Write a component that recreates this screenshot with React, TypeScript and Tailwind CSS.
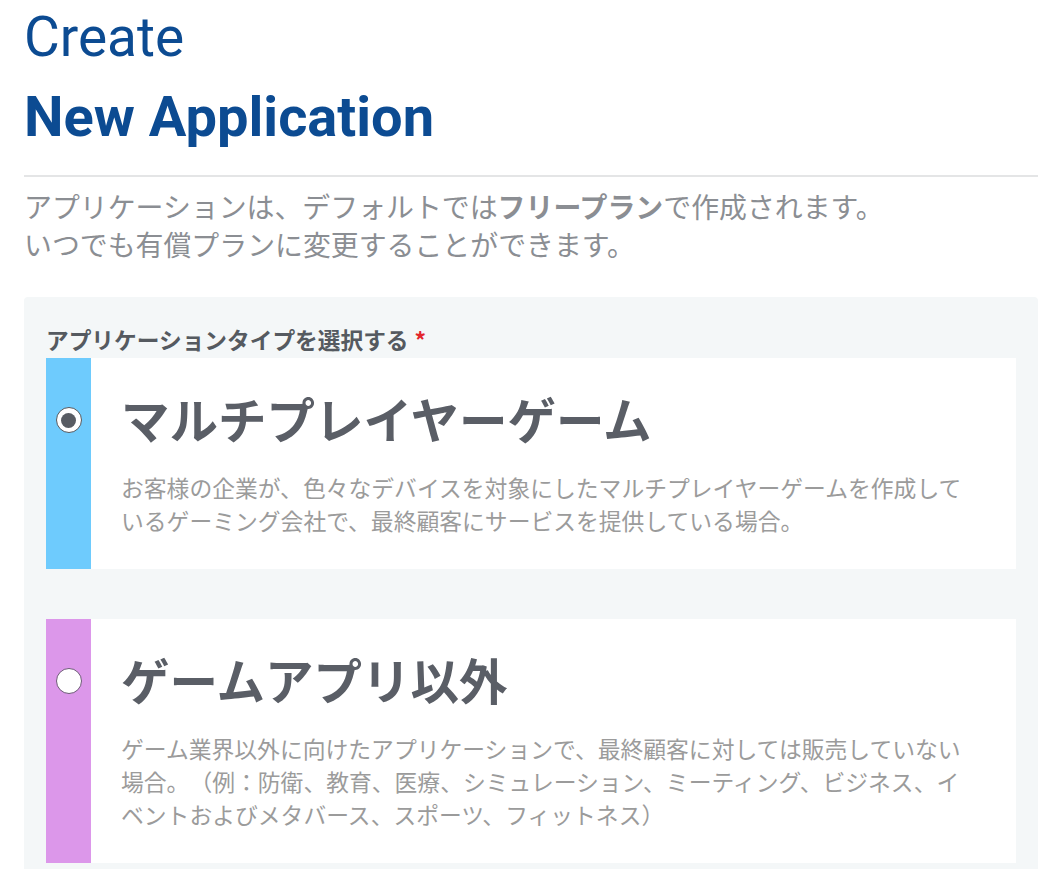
const jp = "font-['Noto_Sans_CJK_JP',sans-serif] [text-spacing-trim:space-all]";

const types = [
  {
    id: "game",
    title: "マルチプレイヤーゲーム",
    desc: "お客様の企業が、色々なデバイスを対象にしたマルチプレイヤーゲームを作成しているゲーミング会社で、最終顧客にサービスを提供している場合。",
    bar: "bg-[#6ecbfd]",
    ring: "border-[#55585e]",
    checked: true,
  },
  {
    id: "other",
    title: "ゲームアプリ以外",
    desc: "ゲーム業界以外に向けたアプリケーションで、最終顧客に対しては販売していない場合。（例：防衛、教育、医療、シミュレーション、ミーティング、ビジネス、イベントおよびメタバース、スポーツ、フィットネス）",
    bar: "bg-[#dc97ea]",
    ring: "border-[#6e5a78]",
    checked: false,
  },
];

function Radio({ checked, ring }: { checked: boolean; ring: string }) {
  return (
    <span className={`flex h-[26px] w-[26px] items-center justify-center rounded-full border bg-white ${ring}`}>
      {checked && <span className="h-[15px] w-[15px] rounded-full bg-[#585c63]" />}
    </span>
  );
}

export default function App() {
  return (
    <div className="min-h-screen bg-white pl-[24px] pr-[21px]">
      <h1 className="font-['Roboto',sans-serif] text-[#0c4b92]">
        <span className="block pt-[5px] text-[55px] leading-[64px] font-normal">Create</span>
        <span className="mt-[16px] block text-[56px] leading-[64px] font-bold">New Application</span>
      </h1>

      <hr className="mt-[26px] border-t-2 border-[#e4e5e6]" />

      <p className={`mt-[10px] text-[27.9px] leading-[38px] text-[#8b8e93] ${jp}`}>
        アプリケーションは、デフォルトでは<b className="font-bold">フリープラン</b>で作成されます。
        <br />
        いつでも有償プランに変更することができます。
      </p>

      <section className={`mt-[34px] rounded-sm bg-[#f4f7f8] px-[22px] pt-[28px] pb-[40px] ${jp}`}>
        <label className="block text-[22.7px] leading-[30px] font-bold text-[#555a60]">
          アプリケーションタイプを選択する
          <span className="ml-[6px] text-[#e3262d]">*</span>
        </label>

        <div className="mt-[3px] flex flex-col gap-[50px]">
          {types.map((t) => (
            <div key={t.id} className="flex bg-white">
              <div className={`flex w-[45px] shrink-0 justify-center pt-[49px] ${t.bar}`}>
                <Radio checked={t.checked} ring={t.ring} />
              </div>
              <div className="pl-[30px] pr-[43px] pt-[31px] pb-[32px]">
                <h2 className="text-[48.5px] leading-[58px] font-bold text-[#5a5e66]">{t.title}</h2>
                <p className="mt-[24px] text-[22.8px] leading-[33px] text-[#9b9b9b]">{t.desc}</p>
              </div>
            </div>
          ))}
        </div>
      </section>
    </div>
  );
}
